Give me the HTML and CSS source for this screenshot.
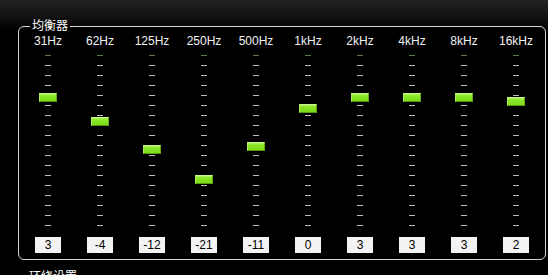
FILE: index.html
```html
<!DOCTYPE html>
<html lang="zh">
<head>
<meta charset="utf-8">
<link rel="stylesheet" href="styles.css">
</head>
<body>
<div class="panel">
  <fieldset class="eq">
    <legend>均衡器</legend>
    <div class="bands">
      <div class="band"><div class="freq">31Hz</div><div class="track"><div class="ticks"></div><div class="thumb" style="top:45.2px"></div></div><div class="val">3</div></div>
      <div class="band"><div class="freq">62Hz</div><div class="track"><div class="ticks"></div><div class="thumb" style="top:69.3px"></div></div><div class="val">-4</div></div>
      <div class="band"><div class="freq">125Hz</div><div class="track"><div class="ticks"></div><div class="thumb" style="top:97px"></div></div><div class="val">-12</div></div>
      <div class="band"><div class="freq">250Hz</div><div class="track"><div class="ticks"></div><div class="thumb" style="top:127px"></div></div><div class="val">-21</div></div>
      <div class="band"><div class="freq">500Hz</div><div class="track"><div class="ticks"></div><div class="thumb" style="top:93.5px"></div></div><div class="val">-11</div></div>
      <div class="band"><div class="freq">1kHz</div><div class="track"><div class="ticks"></div><div class="thumb" style="top:55.5px"></div></div><div class="val">0</div></div>
      <div class="band"><div class="freq">2kHz</div><div class="track"><div class="ticks"></div><div class="thumb" style="top:45.2px"></div></div><div class="val">3</div></div>
      <div class="band"><div class="freq">4kHz</div><div class="track"><div class="ticks"></div><div class="thumb" style="top:45.2px"></div></div><div class="val">3</div></div>
      <div class="band"><div class="freq">8kHz</div><div class="track"><div class="ticks"></div><div class="thumb" style="top:45.2px"></div></div><div class="val">3</div></div>
      <div class="band"><div class="freq">16kHz</div><div class="track"><div class="ticks"></div><div class="thumb" style="top:48.6px"></div></div><div class="val">2</div></div>
    </div>
  </fieldset>
  <fieldset class="next">
    <legend>环绕设置</legend>
  </fieldset>
</div>
</body>
</html>
```
FILE: styles.css
```css
html, body {
  margin: 0;
  padding: 0;
}
body {
  width: 548px;
  height: 275px;
  overflow: hidden;
  background: linear-gradient(to bottom, #222222 0px, #141414 14px, #050505 26px, #000000 32px) no-repeat, #000;
  color: #fff;
  font-family: "Liberation Sans", "Noto Sans CJK SC", sans-serif;
  font-size: 12px;
}
.panel {
  height: 275px;
  overflow: hidden;
  box-sizing: border-box;
  padding: 19px 2px 0 18px;
}
fieldset {
  margin: 0;
  border: 1px solid #d6d6d6;
  border-radius: 6px;
  padding: 0;
  min-width: 0;
}
legend {
  margin-left: 8px;
  padding: 0 2px;
  font-size: 12px;
  line-height: 14px;
  color: #fff;
}
.eq {
  padding: 1px 3px 6px 3px;
}
.bands {
  display: grid;
  grid-template-columns: repeat(10, 52px);
  justify-content: center;
}
.band {
  display: flex;
  flex-direction: column;
  align-items: center;
}
.freq {
  line-height: 14px;
  height: 14px;
  color: #f2f2f2;
  white-space: nowrap;
}
.track {
  position: relative;
  width: 52px;
  height: 184px;
}
.ticks {
  margin: 7px auto 0;
  width: 6px;
  height: 171px;
  background:
    linear-gradient(#5b7d48, #5b7d48) 0 0 / 6px 1px no-repeat,
    repeating-linear-gradient(to bottom, #bcbcbc 0px, #bcbcbc 1px, transparent 1px, transparent 10px) 0 10px / 6px 161px no-repeat;
}
.thumb {
  position: absolute;
  left: 17px;
  width: 18px;
  height: 9px;
  box-sizing: border-box;
  background: linear-gradient(to bottom, #b0f55a 0px, #8ae62a 2px, #7edc18 7px, #68bc10 9px);
  border-top: 1px solid #c8f88a;
  border-left: 1px solid #a8ee5c;
  border-right: 1px solid #62aa12;
  border-bottom: 1px solid #569a0e;
}
.val {
  margin-top: 5px;
  width: 26px;
  height: 16px;
  line-height: 16px;
  background: #f3f3f3;
  color: #000;
  text-align: center;
}
.next {
  margin-top: 10px;
  height: 40px;
}
```
